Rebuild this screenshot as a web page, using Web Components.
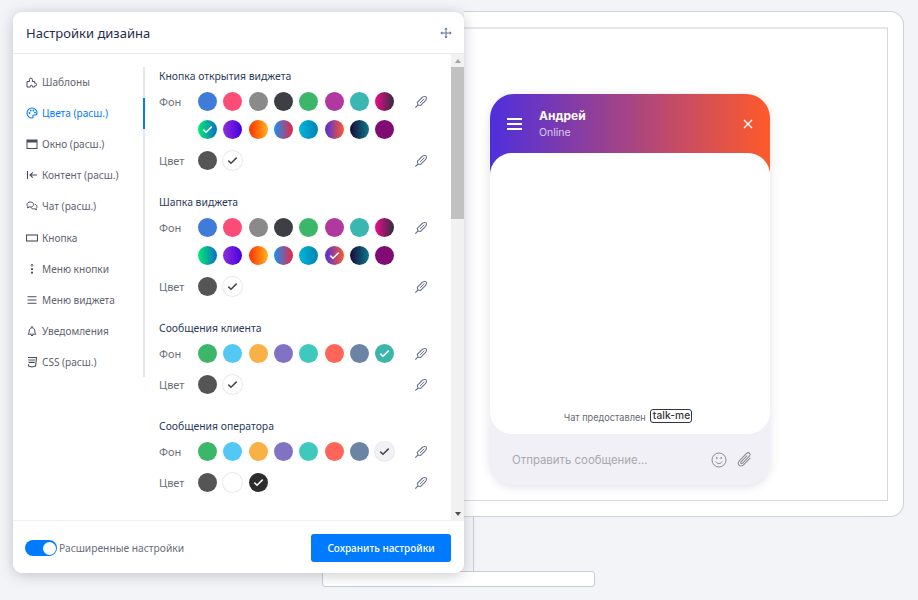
<!DOCTYPE html>
<html lang="ru">
<head>
<meta charset="utf-8">
<title>Настройки дизайна</title>
<style>
  html, body { margin: 0; padding: 0; height: 100%; overflow: hidden; background: #f3f4f8; }
  body { font-family: "Noto Sans", "Open Sans", sans-serif; }
</style>
</head>
<body>
<design-page>
  <settings-panel slot="panel">
    <nav-item slot="nav" icon="puzzle">Шаблоны</nav-item>
    <nav-item slot="nav" icon="palette" active>Цвета (расш.)</nav-item>
    <nav-item slot="nav" icon="window">Окно (расш.)</nav-item>
    <nav-item slot="nav" icon="content">Контент (расш.)</nav-item>
    <nav-item slot="nav" icon="chat">Чат (расш.)</nav-item>
    <nav-item slot="nav" icon="button">Кнопка</nav-item>
    <nav-item slot="nav" icon="dots">Меню кнопки</nav-item>
    <nav-item slot="nav" icon="lines">Меню виджета</nav-item>
    <nav-item slot="nav" icon="bell">Уведомления</nav-item>
    <nav-item slot="nav" icon="css">CSS (расш.)</nav-item>

    <color-section heading="Кнопка открытия виджета">
      <color-row label="Фон" colors="widget" selected="8" mark="light"></color-row>
      <color-row label="Цвет" colors="text" selected="1" mark="dark"></color-row>
    </color-section>
    <color-section heading="Шапка виджета">
      <color-row label="Фон" colors="widget" selected="13" mark="light"></color-row>
      <color-row label="Цвет" colors="text" selected="1" mark="dark"></color-row>
    </color-section>
    <color-section heading="Сообщения клиента">
      <color-row label="Фон" colors="client" selected="7" mark="light"></color-row>
      <color-row label="Цвет" colors="text" selected="1" mark="dark"></color-row>
    </color-section>
    <color-section heading="Сообщения оператора">
      <color-row label="Фон" colors="operator" selected="7" mark="dark"></color-row>
      <color-row label="Цвет" colors="textDark" selected="2" mark="light"></color-row>
    </color-section>
    <color-section heading="Ссылки"></color-section>
  </settings-panel>
  <chat-preview slot="preview"></chat-preview>
</design-page>

<script>
const ICONS = {
  puzzle: '<path d="M1 11V5.500h2.400V3.600a1.500 1.500 0 0 1 3 0v1.900h2.300v1.700h.6a1.300 1.300 0 0 1 0 2.600h-.6V11H6.400v-.8a1 1 0 0 0-2 0v.8z" fill="none" stroke="currentColor" stroke-width="1"/>',
  palette: '<path d="M6 1a5 5 0 0 0 0 10c1 0 1.300-.7 1-1.400-.4-.8 0-1.600 1-1.600h1.600C10.500 8 11 7.300 11 6c0-2.800-2.200-5-5-5z" fill="none" stroke="currentColor" stroke-width="1.100"/><circle cx="3.500" cy="6" r=".9" fill="currentColor"/><circle cx="4.700" cy="3.600" r=".9" fill="currentColor"/><circle cx="7.400" cy="3.500" r=".9" fill="currentColor"/><circle cx="9" cy="5.600" r=".9" fill="currentColor"/>',
  window: '<rect x="1" y="2" width="10" height="8.500" fill="none" stroke="currentColor"/><rect x="1" y="2" width="10" height="2.500" fill="currentColor"/>',
  content: '<path d="M1.500 2v8M11 6H4M6.800 3.300 4 6l2.800 2.700" fill="none" stroke="currentColor" stroke-width="1.100"/>',
  chat: '<path d="M1 4.500C1 3 2.400 2 4.300 2S7.600 3 7.600 4.500 6.200 7 4.300 7c-.4 0-.8 0-1.100-.1L1.600 8l.3-1.600C1.300 5.900 1 5.200 1 4.500z" fill="none" stroke="currentColor"/><path d="M8.800 4.300c1.300.3 2.200 1.200 2.200 2.300 0 .7-.3 1.300-.9 1.700l.3 1.500-1.700-.9C6.900 9.100 5.400 8.600 4.900 7.400" fill="none" stroke="currentColor"/>',
  button: '<rect x=".5" y="3" width="11" height="6" fill="none" stroke="currentColor" stroke-width="1.100"/>',
  dots: '<circle cx="6" cy="2.300" r="1" fill="none" stroke="currentColor" stroke-width=".8"/><circle cx="6" cy="6" r="1.100" fill="currentColor"/><circle cx="6" cy="9.700" r="1.100" fill="currentColor"/>',
  lines: '<path d="M1.500 2.800h9M1.500 6h9M1.500 9.200h9" fill="none" stroke="currentColor" stroke-width="1.100"/>',
  bell: '<path d="M2 9.200c.8-.8 1.200-1.600 1.200-3.200 0-1.800 1.200-3.300 2.800-3.300S8.800 4.200 8.800 6c0 1.600.4 2.400 1.200 3.200z" fill="none" stroke="currentColor"/><path d="M6 1v1.600M5 10.500h2" stroke="currentColor"/>',
  css: '<path d="M2 1.500h8.500L9.600 10 5.800 11 2.700 10l-.2-1.700" fill="none" stroke="currentColor" stroke-width="1.100"/><path d="M2.300 4h6.600M2.600 6.400h6" stroke="currentColor" stroke-width="1.100"/>'
};

const CHECK = '<svg width="11" height="9" viewBox="0 0 11 9"><path d="M1.300 4.600 4 7.200 9.700 1.600" fill="none" stroke="currentColor" stroke-width="1.500"/></svg>';
const PEN = '<svg width="14" height="14" viewBox="0 0 14 14"><path d="M1.300 12.700 4 10M4 10l-.7-2.600 4.900-4.900c1-1 3.300-1.400 3.900-.7.700.7.300 2.900-.7 3.900L6.600 10.500z" fill="none" stroke="#69758f" stroke-width="1.100"/><path d="M6 7.900 10.300 3.700" stroke="#69758f" stroke-width="1"/></svg>';

const PALETTES = {
  widget: [
    '#3f7bd8', '#fb4d78', '#8a8a8a', '#3d3f45', '#3cb769', '#b0389f', '#3bb6b2',
    'linear-gradient(90deg,#f00a8c,#2d2d3d)',
    'linear-gradient(90deg,#02ec6f,#0b6fc4)',
    'linear-gradient(90deg,#8f2fdc,#4500e0)',
    'linear-gradient(90deg,#ff3000,#ffb21f)',
    'linear-gradient(90deg,#1493f2,#ec2445)',
    'linear-gradient(90deg,#00b6dc,#0083b0)',
    'linear-gradient(90deg,#4f2fdc,#ff5a2a)',
    'linear-gradient(90deg,#1a0a38,#0a7a8a)',
    '#800b72'
  ],
  client: ['#3cb769', '#54c8f5', '#f9b146', '#8272c4', '#3fc9bd', '#ff6559', '#6c84a3', '#3cb5ad'],
  operator: ['#3cb769', '#54c8f5', '#f9b146', '#8272c4', '#3fc9bd', '#ff6559', '#6c84a3', '#f2f2f6'],
  text: ['#555555', '#ffffff'],
  textDark: ['#555555', '#ffffff', '#2d2d2d']
};

class DesignPage extends HTMLElement {
  constructor() {
    super();
    this.attachShadow({mode: "open"}).innerHTML = `
      <style>
        :host { display: block; position: relative; width: 918px; height: 600px; overflow: hidden; }
        .card {
          box-sizing: border-box; margin: 11px 0 0 464px; width: 440px; height: 506px; padding: 15px 15px 15px 0;
          background: #fff; border: 1px solid #cfd1dc; border-left: 0; border-radius: 0 14px 14px 0;
        }
        .frame {
          box-sizing: border-box; height: 474px; display: flex; justify-content: flex-start; align-items: flex-end;
          padding: 0 0 15px 26px; border: 1px solid #d4d6e0; border-left: 0; border-top: 2px solid #e6e7ec;
        }
        .stem { width: 1px; height: 54px; margin-left: 473px; background: #c9cbd8; }
        .field {
          box-sizing: border-box; width: 273px; height: 16px; margin-left: 322px;
          background: #fff; border: 1px solid #c9cbd8; border-radius: 3px;
        }
        .panel { position: absolute; left: 13px; top: 12px; }
      </style>
      <div class="card"><div class="frame"><slot name="preview"></slot></div></div>
      <div class="stem"></div>
      <div class="field"></div>
      <div class="panel"><slot name="panel"></slot></div>`;
  }
}

class NavItem extends HTMLElement {
  constructor() {
    super();
    this.attachShadow({mode: "open"}).innerHTML = `
      <style>
        :host {
          display: flex; align-items: center; gap: 4px; box-sizing: border-box; height: 31.100px; padding-left: 13px;
          font-size: 10.100px; color: #5e6470; border-right: 2px solid transparent;
        }
        :host([active]) { color: #007bff; border-right-color: #007bff; }
        svg { width: 12px; height: 12px; flex: none; }
        :host(:not([active])) svg { color: #474d5c; }
      </style>
      <svg viewBox="0 0 12 12">${ICONS[this.getAttribute("icon")]}</svg>
      <slot></slot>`;
  }
}

class ColorSwatch extends HTMLElement {
  constructor() {
    super();
    const bordered = /#fff|#f2f2f6/.test(this.getAttribute("color"));
    const mark = this.getAttribute("mark");
    this.attachShadow({mode: "open"}).innerHTML = `
      <style>
        :host { display: block; width: 19px; height: 19px; }
        .dot {
          width: 19px; height: 19px; border-radius: 50%; display: flex; align-items: center; justify-content: center;
          background: ${this.getAttribute("color")};
          box-shadow: ${bordered ? "0 0 0 1px #e8e8ee" : "none"};
          color: ${mark === "dark" ? "#45474d" : "#fff"};
        }
      </style>
      <div class="dot">${mark ? CHECK : ""}</div>`;
  }
}

class ColorRow extends HTMLElement {
  constructor() {
    super();
    const colors = PALETTES[this.getAttribute("colors")];
    const selected = Number(this.getAttribute("selected"));
    const mark = this.getAttribute("mark");
    const swatches = colors.map((c, i) =>
      `<color-swatch color="${c}" ${i === selected ? `mark="${mark}"` : ""}></color-swatch>`).join("");
    this.attachShadow({mode: "open"}).innerHTML = `
      <style>
        :host { display: flex; align-items: flex-start; font-size: 11px; color: #6a6f7c; }
        .label { width: 39px; height: 19px; line-height: 19px; flex: none; }
        .list { width: 203px; display: flex; flex-wrap: wrap; column-gap: 6.330px; row-gap: 9px; flex: none; }
        .pen { margin-left: 13px; height: 19px; display: flex; align-items: center; }
      </style>
      <div class="label">${this.getAttribute("label")}</div>
      <div class="list">${swatches}</div>
      <div class="pen">${PEN}</div>`;
  }
}

class ColorSection extends HTMLElement {
  constructor() {
    super();
    this.attachShadow({mode: "open"}).innerHTML = `
      <style>
        :host { display: block; margin-bottom: 22px; }
        h3 { margin: 0 0 6px; height: 20px; line-height: 21px; font-size: 10.400px; font-weight: 400; color: #2c3a5a; }
        .rows { display: flex; flex-direction: column; gap: 12px; }
      </style>
      <h3>${this.getAttribute("heading")}</h3>
      <div class="rows"><slot></slot></div>`;
  }
}

class SettingsPanel extends HTMLElement {
  constructor() {
    super();
    this.attachShadow({mode: "open"}).innerHTML = `
      <style>
        :host {
          display: flex; flex-direction: column; box-sizing: border-box; width: 451px; height: 561px;
          background: #fff; border-radius: 9px; box-shadow: 0 2px 14px rgba(60,66,90,.28); overflow: hidden;
        }
        header {
          box-sizing: border-box; height: 42px; flex: none; display: flex; align-items: center; justify-content: space-between;
          padding: 0 12px 0 13px; border-bottom: 1px solid #e9ebf2;
        }
        h2 { margin: 0; font-size: 13px; font-weight: 400; color: #1f2d4d; }
        .body { flex: 1; min-height: 0; display: flex; }
        nav { width: 132px; flex: none; box-sizing: border-box; align-self: flex-start; margin-top: 12.500px; border-right: 2px solid #e3e6ee; }
        ::slotted(nav-item) { margin-right: -2px; }
        .content { flex: 1; min-width: 0; overflow: hidden; padding: 12px 0 0 14px; }
        .bar { width: 13px; flex: none; background: #f1f1f1; display: flex; flex-direction: column; }
        .arrow { height: 13px; flex: none; display: flex; align-items: center; justify-content: center; }
        .up { width: 0; height: 0; border: 3.500px solid transparent; border-top: 0; border-bottom: 4px solid #a3a3a3; }
        .down { width: 0; height: 0; border: 3.500px solid transparent; border-bottom: 0; border-top: 4px solid #505050; }
        .thumb { height: 152px; flex: none; background: #c1c1c1; }
        .track { flex: 1; }
        footer {
          box-sizing: border-box; height: 53px; flex: none; display: flex; align-items: center; justify-content: space-between;
          padding: 2px 13px 0 12px; border-top: 1px solid #eff0f5; background: #fff;
        }
        .adv { display: flex; align-items: center; gap: 2px; font-size: 10.250px; color: #686d79; }
        .toggle { width: 32px; height: 16px; border-radius: 8px; background: #007bff; display: flex; justify-content: flex-end; padding: 1.500px; box-sizing: border-box; }
        .toggle i { width: 13px; height: 13px; border-radius: 50%; background: #fff; }
        button {
          width: 140px; height: 28px; border: 0; border-radius: 3px; background: #007bff; color: #fff;
          font: 500 10px "Noto Sans", sans-serif; padding: 0;
        }
      </style>
      <header>
        <h2>Настройки дизайна</h2>
        <svg width="12" height="12" viewBox="0 0 12 12"><path d="M6 1v10M1 6h10" stroke="#5f7499" stroke-width="1"/><path d="M6 .4 7.700 2.400H4.300zM6 11.600 4.300 9.600h3.400zM.4 6l2-1.700v3.400zM11.600 6l-2 1.700V4.300z" fill="#5f7499"/></svg>
      </header>
      <div class="body">
        <nav><slot name="nav"></slot></nav>
        <div class="content"><slot></slot></div>
        <div class="bar">
          <div class="arrow"><span class="up"></span></div>
          <div class="thumb"></div>
          <div class="track"></div>
          <div class="arrow"><span class="down"></span></div>
        </div>
      </div>
      <footer>
        <div class="adv"><span class="toggle"><i></i></span>Расширенные настройки</div>
        <button>Сохранить настройки</button>
      </footer>`;
  }
}

class ChatPreview extends HTMLElement {
  constructor() {
    super();
    this.attachShadow({mode: "open"}).innerHTML = `
      <style>
        :host {
          display: flex; flex-direction: column; width: 280px; height: 391px; border-radius: 24px; overflow: hidden;
          background: #f1f0f6; box-shadow: 0 2px 10px rgba(70,70,100,.16);
          font-family: Inter, "Noto Sans", sans-serif;
        }
        .top {
          height: 84px; flex: none; margin-bottom: -25px; box-sizing: border-box; padding: 0 17px 25px;
          display: flex; align-items: center; color: #fff;
          background: linear-gradient(90deg,#4f2fdc,#ff5a2a);
        }
        .burger { width: 15px; height: 12px; display: flex; flex-direction: column; justify-content: space-between; margin-right: 17px; }
        .burger i { height: 2px; background: #fff; }
        .who { flex: 1; }
        .name { font-size: 12px; font-weight: 700; line-height: 16px; }
        .state { font-size: 10.500px; line-height: 16px; margin-top: 1px; margin-bottom: -1px; opacity: .72; }
        .main {
          height: 281px; flex: none; box-sizing: border-box; background: #fff; border-radius: 22px;
          display: flex; align-items: flex-end; justify-content: center; gap: 4px; padding: 0 4px 11px 0;
          font-size: 9.200px; color: #666a70;
        }
        .brand {
          font-size: 10.200px; line-height: 11px; color: #33363a; border: 1px solid #33363a; border-radius: 3px; padding: 0 1px 1px 2px;
          font-weight: 500; letter-spacing: .1px; margin-left: 0;
        }
        .send { flex: 1; display: flex; align-items: center; padding: 0 17px 0 22px; gap: 9px; }
        .hint { flex: 1; font-size: 11.400px; color: #a9a9b0; }
      </style>
      <div class="top">
        <div class="burger"><i></i><i></i><i></i></div>
        <div class="who"><div class="name">Андрей</div><div class="state">Online</div></div>
        <svg width="10" height="10" viewBox="0 0 10 10"><path d="M1 1l8 8M9 1l-8 8" stroke="#fff" stroke-width="1.300"/></svg>
      </div>
      <div class="main"><span>Чат предоставлен</span><span class="brand">talk-me</span></div>
      <div class="send">
        <div class="hint">Отправить сообщение...</div>
        <svg width="16" height="16" viewBox="0 0 16 16" fill="none" stroke="#8c8c94"><circle cx="8" cy="8" r="7"/><path d="M4.800 9.600c.8 1.300 1.900 1.900 3.200 1.900s2.400-.6 3.200-1.900"/><circle cx="5.800" cy="6" r=".5" fill="#8c8c94"/><circle cx="10.200" cy="6" r=".5" fill="#8c8c94"/></svg>
        <svg width="17" height="17" viewBox="0 0 16 16" fill="none" stroke="#8c8c94"><path d="M13.500 6.500 7.300 12.900c-1.300 1.400-3.300 1.600-4.400.5-1.100-1.100-.9-3 .4-4.400L9.700 2.500c.9-.9 2.200-1.100 3-.4.800.8.600 2.100-.3 3L6.300 11.400c-.5.500-1.200.6-1.600.2-.4-.4-.3-1.100.2-1.600L10.500 4.300"/></svg>
      </div>`;
  }
}

customElements.define("nav-item", NavItem);
customElements.define("color-swatch", ColorSwatch);
customElements.define("color-row", ColorRow);
customElements.define("color-section", ColorSection);
customElements.define("settings-panel", SettingsPanel);
customElements.define("chat-preview", ChatPreview);
customElements.define("design-page", DesignPage);
</script>
</body>
</html>
